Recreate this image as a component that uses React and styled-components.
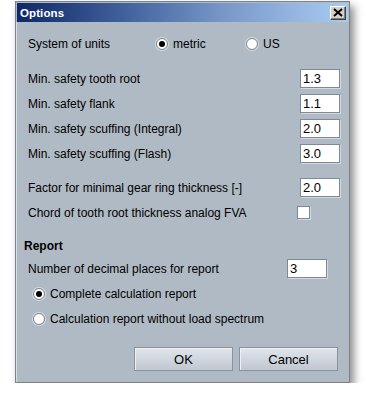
import React, { useState } from "react";
import styled, { createGlobalStyle } from "styled-components";

const GlobalStyle = createGlobalStyle`
  body {
    margin: 0;
    background: #ffffff;
    font-family: "Liberation Sans", Arial, sans-serif;
    font-size: 12px;
    color: #000;
  }
`;

export default function App() {
  const [units, setUnits] = useState("metric");
  const [report, setReport] = useState("complete");

  return (
    <>
      <GlobalStyle />
      <Page>
        <Window>
          <TitleBar>
            <Title>Options</Title>
            <CloseButton>
              <svg width="10" height="9" viewBox="0 0 10 9">
                <path d="M1 1 L9 8 M9 1 L1 8" stroke="#000" strokeWidth="2" />
              </svg>
            </CloseButton>
          </TitleBar>

          <Content>
            <Row>
              <UnitsLabel>System of units</UnitsLabel>
              <RadioOption $width="90px" onClick={() => setUnits("metric")}>
                <Radio $checked={units === "metric"} />
                metric
              </RadioOption>
              <RadioOption onClick={() => setUnits("US")}>
                <Radio $checked={units === "US"} />
                US
              </RadioOption>
            </Row>

            <Group $top="10px">
              <Row>
                <Label>Min. safety tooth root</Label>
                <Field defaultValue="1.3" />
              </Row>
              <Row>
                <Label>Min. safety flank</Label>
                <Field defaultValue="1.1" />
              </Row>
              <Row>
                <Label>Min. safety scuffing (Integral)</Label>
                <Field defaultValue="2.0" />
              </Row>
              <Row>
                <Label>Min. safety scuffing (Flash)</Label>
                <Field defaultValue="3.0" />
              </Row>
            </Group>

            <Group $top="9px">
              <Row>
                <Label>Factor for minimal gear ring thickness [-]</Label>
                <Field defaultValue="2.0" />
              </Row>
              <Row>
                <Label>Chord of tooth root thickness analog FVA</Label>
                <CheckSlot>
                  <CheckBox />
                </CheckSlot>
              </Row>
            </Group>

            <SectionTitle>Report</SectionTitle>
            <Row>
              <Label>Number of decimal places for report</Label>
              <Field defaultValue="3" $right="13px" />
            </Row>
            <Row $indent="5px">
              <RadioOption onClick={() => setReport("complete")}>
                <Radio $checked={report === "complete"} />
                Complete calculation report
              </RadioOption>
            </Row>
            <Row $indent="5px">
              <RadioOption onClick={() => setReport("nospectrum")}>
                <Radio $checked={report === "nospectrum"} />
                Calculation report without load spectrum
              </RadioOption>
            </Row>

            <ButtonBar>
              <Button>OK</Button>
              <Button>Cancel</Button>
            </ButtonBar>
          </Content>
        </Window>
      </Page>
    </>
  );
}

const Page = styled.div`
  padding: 1px 0 0 15px;
`;

const Window = styled.div`
  width: 333px;
  border: 1px solid #7b828a;
  background: #b0bac4;
  box-shadow: 4px 5px 8px rgba(0, 0, 0, 0.45);
  display: flex;
  flex-direction: column;
`;

const TitleBar = styled.div`
  height: 19px;
  margin: 1px 1px 0 1px;
  display: flex;
  align-items: center;
  justify-content: space-between;
  padding: 0 2px 0 3px;
  background: linear-gradient(to right, #0e2866 0%, #3d5d99 30%, #7b9ccb 65%, #a8cbf1 100%);
`;

const Title = styled.span`
  color: #ffffff;
  font-weight: bold;
  font-size: 11.5px;
  letter-spacing: 0.1px;
`;

const CloseButton = styled.div`
  width: 16px;
  height: 14px;
  box-sizing: border-box;
  background: #d4d0c8;
  border: 1px solid;
  border-color: #ffffff #404040 #404040 #ffffff;
  box-shadow: inset -1px -1px 0 #808080;
  display: flex;
  align-items: center;
  justify-content: center;
`;

const Content = styled.div`
  display: flex;
  flex-direction: column;
  padding: 9px 9px 11px 12px;
  box-shadow: inset 1px 0 0 #d9dee3;
`;

const Group = styled.div`
  display: flex;
  flex-direction: column;
  margin-top: ${({ $top }) => $top};
`;

const Row = styled.div`
  height: 25px;
  display: flex;
  align-items: center;
  padding-left: ${({ $indent }) => $indent || "0"};
`;

const Label = styled.span`
  flex: 1;
  white-space: nowrap;
`;

const UnitsLabel = styled.span`
  width: 128px;
`;

const SectionTitle = styled.div`
  height: 20px;
  display: flex;
  align-items: center;
  margin: 11px 0 0 -4px;
  font-weight: bold;
`;

const RadioOption = styled.label`
  display: flex;
  align-items: center;
  gap: 5px;
  width: ${({ $width }) => $width || "auto"};
  cursor: default;
`;

const Radio = styled.span`
  position: relative;
  width: 12px;
  height: 12px;
  box-sizing: border-box;
  border-radius: 50%;
  border: 1px solid #7f8893;
  background: radial-gradient(circle at 40% 40%, #ffffff 55%, #dfe3e8 100%);
  box-shadow: 0 0 0 1px rgba(255, 255, 255, 0.5);
  &::after {
    content: "";
    display: ${({ $checked }) => ($checked ? "block" : "none")};
    position: absolute;
    left: 2px;
    top: 2px;
    width: 6px;
    height: 6px;
    border-radius: 50%;
    background: #000;
  }
`;

const Field = styled.input`
  width: 40px;
  height: 19px;
  box-sizing: border-box;
  margin-right: ${({ $right }) => $right || "0"};
  padding: 0 2px;
  border: 1px solid #7d8996;
  box-shadow: 1px 1px 0 #d3d9df;
  background: #fff;
  font-family: "Liberation Sans", Arial, sans-serif;
  font-size: 13px;
  color: #000;
  outline: none;
`;

const CheckSlot = styled.div`
  width: 43px;
  display: flex;
`;

const CheckBox = styled.span`
  width: 13px;
  height: 13px;
  box-sizing: border-box;
  border: 1px solid #7d8996;
  box-shadow: 1px 1px 0 #d3d9df;
  background: #fff;
`;

const ButtonBar = styled.div`
  display: flex;
  justify-content: flex-end;
  gap: 6px;
  margin-top: 16px;
  padding-right: 2px;
`;

const Button = styled.button`
  width: 99px;
  height: 24px;
  border: 1px solid #8a929c;
  box-shadow: inset 1px 1px 0 #eef1f4;
  background: linear-gradient(to bottom, #e1e6ec 0%, #ccd3db 60%, #bfc7d0 100%);
  font-family: "Liberation Sans", Arial, sans-serif;
  font-size: 13px;
  color: #000;
  padding: 0;
`;
